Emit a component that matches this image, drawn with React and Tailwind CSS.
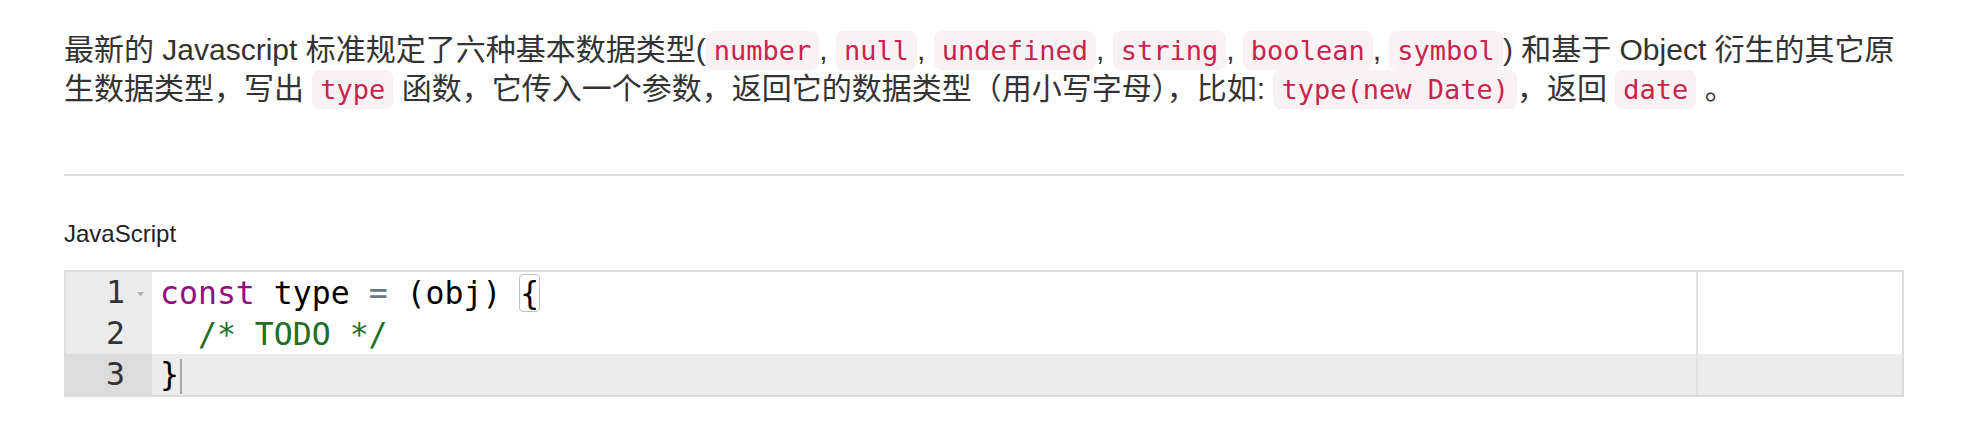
import React from 'react';

const SANS = "font-['Liberation_Sans','Noto_Sans_CJK_SC',sans-serif]";

const Code = ({ children }) => (
  <code className="rounded-[8px] bg-[#f9f2f4] px-[8px] py-[4px] font-['DejaVu_Sans_Mono',monospace] text-[27px] leading-none text-[#c7254e]">
    {children}
  </code>
);

const lines = [
  {
    no: 1,
    fold: true,
    content: (
      <>
        <span className="text-[#930f80]">const</span>
        <span> type </span>
        <span className="text-[#687687]">=</span>
        <span> (obj) </span>
        <span className="rounded-[3px] outline outline-[#c0c0c0]">{'{'}</span>
      </>
    ),
  },
  {
    no: 2,
    content: <span className="text-[#236e24]">{'  /* TODO */'}</span>,
  },
  {
    no: 3,
    active: true,
    content: (
      <>
        <span>{'}'}</span>
        <span className="ml-px inline-block h-[35px] w-[2px] bg-[#a8a8a8] align-middle" />
      </>
    ),
  },
];

const Editor = () => (
  <div className="flex border-2 border-[#dcdcdc] font-['DejaVu_Sans_Mono',monospace] text-[31.5px]">
    {/* gutter */}
    <div className="w-[86px] shrink-0 bg-[#ebebeb] text-[#333]">
      {lines.map((l) => (
        <div
          key={l.no}
          className={`flex h-[41px] items-center justify-end ${l.active ? 'bg-[#dcdcdc]' : ''}`}
        >
          <span className="leading-none">{l.no}</span>
          <span className="flex w-[27px] items-center pl-[12px] pt-[4px]">
            {l.fold && (
              <svg width="7" height="5" viewBox="0 0 7 5">
                <path d="M0 0 L7 0 L3.5 4.5 Z" fill="#b4b4b4" />
              </svg>
            )}
          </span>
        </div>
      ))}
    </div>

    {/* code area */}
    <div className="relative flex-1 bg-white">
      {lines.map((l) => (
        <div
          key={l.no}
          className={`flex h-[41px] items-center whitespace-pre pl-[8px] text-black ${l.active ? 'bg-[#ececec]' : ''}`}
        >
          <span className="leading-[38px]">{l.content}</span>
        </div>
      ))}
      {/* print margin */}
      <div className="absolute top-0 bottom-0 left-[1544px] w-[2px] bg-[#e2e2e2]" />
    </div>
  </div>
);

export default function App() {
  return (
    <div className={`min-h-[436px] bg-white ${SANS} text-[#333]`}>
      <div className="ml-[64px] w-[1840px] pt-[30px]">
        <p className="text-[30px] leading-[39px]">
          最新的 Javascript 标准规定了六种基本数据类型(<Code>number</Code>, <Code>null</Code>,{' '}
          <Code>undefined</Code>, <Code>string</Code>, <Code>boolean</Code>, <Code>symbol</Code>) 和基于 Object
          衍生的其它原生数据类型，写出 <Code>type</Code> 函数，它传入一个参数，返回它的数据类型（用小写字母），比如:{' '}
          <Code>type(new Date)</Code>，返回 <Code>date</Code> 。
        </p>

        <div className="mt-[66px] h-[2px] bg-[#dddddd]" />

        <div className="mt-[46px] text-[24px] leading-[24px] text-[#222]">JavaScript</div>

        <div className="mt-[24px]">
          <Editor />
        </div>
      </div>
    </div>
  );
}
